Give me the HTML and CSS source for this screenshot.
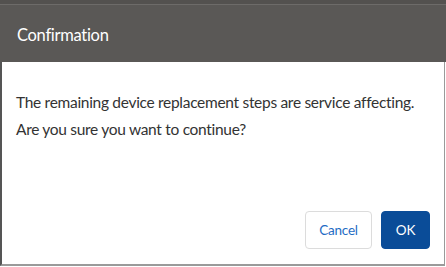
FILE: index.html
```html
<!DOCTYPE html>
<html lang="en">
<head>
    <meta charset="UTF-8">
    <meta name="viewport" content="width=device-width, initial-scale=1.0">
    <title>Confirmation</title>
    <link rel="stylesheet" href="styles.css">
</head>
<body>
    <div class="dialog">
        <div class="dialog-header">
            <h1>Confirmation</h1>
        </div>
        <div class="dialog-body">
            <p>The remaining device replacement steps are service affecting.<br>Are you sure you want to continue?</p>
            <div class="actions">
                <button class="button cancel">Cancel</button>
                <button class="button ok">OK</button>
            </div>
        </div>
    </div>
</body>
</html>
```

FILE: styles.css
```css
body {
    margin: 0;
    font-family: Lato, "Open Sans", sans-serif;
    background-color: #fff;
}

.dialog {
    width: 446px;
    height: 267px;
    display: flex;
    flex-direction: column;
}

.dialog-header {
    height: 58px;
    background-color: #5a5856;
    border-top: 4px solid #53514f;
    box-shadow: inset 0 1px 0 #6d6b69;
    display: flex;
    align-items: center;
    padding: 0 17px;
}

.dialog-header h1 {
    margin: 3px 0 0 0;
    color: #fff;
    font-size: 16.5px;
    font-weight: 400;
    letter-spacing: -0.3px;
}

.dialog-body {
    flex: 1;
    margin-right: 1px;
    margin-bottom: 1px;
    border-left: 2px solid #555;
    border-right: 1px solid #9a9a9a;
    border-bottom: 2px solid #9a9a9a;
    display: flex;
    flex-direction: column;
    padding: 0 14px 15px 14px;
}

.dialog-body p {
    margin: 27px 0 0 0;
    color: #333;
    font-size: 15.5px;
    line-height: 27px;
    letter-spacing: -0.3px;
    white-space: nowrap;
}

.actions {
    margin-top: auto;
    display: flex;
    justify-content: flex-end;
    gap: 9px;
}

.button {
    height: 38px;
    border-radius: 4px;
    font-family: Lato, "Open Sans", sans-serif;
    font-size: 13.5px;
    letter-spacing: -0.2px;
    cursor: pointer;
}

.cancel {
    width: 67px;
    background-color: #fff;
    border: 1px solid #dcdcdc;
    color: #1f6cc4;
}

.ok {
    width: 49px;
    background-color: #0a4c98;
    border: 1px solid #0a4c98;
    color: #fff;
}
```
